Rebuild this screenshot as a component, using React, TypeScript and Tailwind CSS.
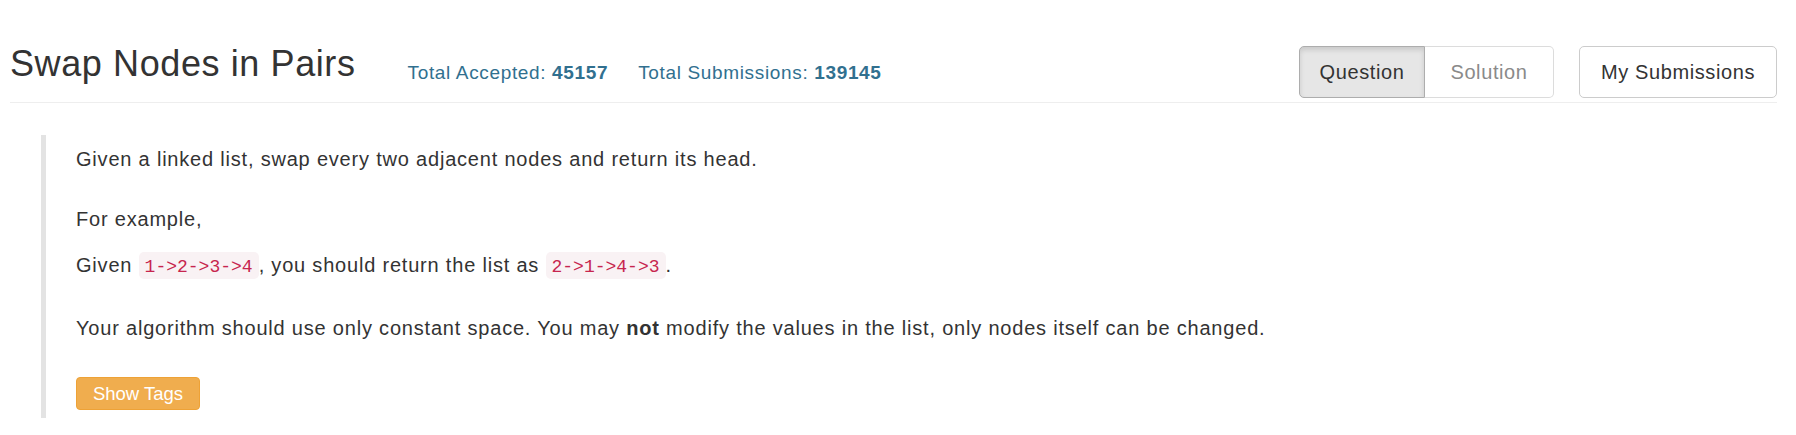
import React from "react";

function Code({ children }: { children: React.ReactNode }) {
  return (
    <code className="font-['Liberation_Mono',monospace] text-[18px] text-[#c7254e] bg-[#f9f2f4] rounded-[5px] px-[6px] pt-[5px] pb-[2px] tracking-normal">
      {children}
    </code>
  );
}

export default function App() {
  return (
    <div className="w-[1796px] h-[435px] bg-white pl-[10px] pr-[19px] font-['Liberation_Sans',Arial,sans-serif] text-[#333333]">
      <div className="flex items-start pt-[46px] pb-[4px] border-b border-[#eeeeee]">
        <h1 className="text-[36px] leading-[36px] tracking-[0.6px] font-normal whitespace-nowrap">
          Swap Nodes in Pairs
        </h1>
        <div className="flex mt-[17px] ml-[52px] text-[19px] leading-[19px] tracking-[0.65px] text-[#31708f] whitespace-nowrap">
          <span>
            Total Accepted: <b className="font-bold">45157</b>
          </span>
          <span className="ml-[30px]">
            Total Submissions: <b className="font-bold">139145</b>
          </span>
        </div>
        <div className="ml-auto flex items-start">
          <div className="flex">
            <button className="w-[126px] h-[52px] flex items-center justify-center text-[20px] leading-[50px] tracking-[0.6px] text-[#333333] bg-[#e6e6e6] border border-[#adadad] rounded-l-[5px] shadow-[inset_0_3px_5px_rgba(0,0,0,0.125)]">
              Question
            </button>
            <button className="w-[129px] h-[52px] flex items-center justify-center text-[20px] leading-[50px] tracking-[0.6px] text-[#8a8a8a] bg-white border border-l-0 border-[#dcdcdc] rounded-r-[5px]">
              Solution
            </button>
          </div>
          <button className="ml-[25px] w-[198px] h-[52px] flex items-center justify-center text-[20px] leading-[50px] tracking-[0.6px] text-[#333333] bg-white border border-[#cccccc] rounded-[5px]">
            My Submissions
          </button>
        </div>
      </div>

      <div className="mt-[32px] ml-[31px] border-l-[5px] border-[#e3e3e3] pl-[30px] pt-[11px] pb-[8px] text-[20px] leading-[26px] tracking-[0.8px]">
        <p>Given a linked list, swap every two adjacent nodes and return its head.</p>
        <p className="mt-[34px]">For example,</p>
        <p className="mt-[20px]">
          Given <Code>1-&gt;2-&gt;3-&gt;4</Code>, you should return the list as{" "}
          <Code>2-&gt;1-&gt;4-&gt;3</Code>.
        </p>
        <p className="mt-[35px]">
          Your algorithm should use only constant space. You may <b className="font-bold">not</b> modify the values in the list, only nodes itself can be changed.
        </p>
        <button className="mt-[36px] w-[124px] h-[33px] flex items-center justify-center bg-[#f0ad4e] border border-[#eea236] rounded-[4px] text-white text-[18.5px] leading-[31px] tracking-normal">
          Show Tags
        </button>
      </div>
    </div>
  );
}
